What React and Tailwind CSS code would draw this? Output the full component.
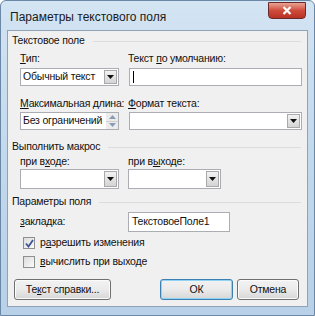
import React from "react";

const font = { fontFamily: '"Liberation Sans", Arial, sans-serif' };

function Arrow() {
  return (
    <svg width="7" height="4" viewBox="0 0 7 4">
      <path d="M0 0 H7 L3.5 4 Z" fill="#111" />
    </svg>
  );
}

function Combo({ w, value = "" }) {
  return (
    <div className={`flex h-full border border-[#abadb3] bg-white ${w}`}>
      <div className="flex-1 flex items-center pl-[2px] text-[10.5px] tracking-[-0.2px] text-[#111] whitespace-nowrap overflow-hidden">{value}</div>
      <div className="w-[13px] my-[1px] mr-[1px] flex items-center justify-center border border-[#a9a9a9] bg-gradient-to-b from-[#f2f2f2] to-[#d4d4d4]">
        <Arrow />
      </div>
    </div>
  );
}

function Header({ children }) {
  return (
    <div className="flex items-center h-[16px] pl-[4px] pr-[6px] text-[10.5px] tracking-[-0.2px] text-[#111]">
      <span className="whitespace-nowrap">{children}</span>
      <div className="flex-1 ml-[8px] h-px bg-[#dcdcdc]" />
    </div>
  );
}

function Check({ checked, children }) {
  return (
    <div className="flex items-center h-[16px] pl-[15px] text-[10.5px] tracking-[-0.2px] text-[#111]">
      <div className="w-[12px] h-[12px] border border-[#8e8f8f] bg-gradient-to-br from-[#dcdcdc] to-[#fafafa] flex items-center justify-center">
        {checked && (
          <svg width="9" height="9" viewBox="0 0 9 9">
            <path d="M1 4.5 L3.5 7.5 L8 1" stroke="#3d5596" strokeWidth="1.8" fill="none" />
          </svg>
        )}
      </div>
      <span className="ml-[5px]">{children}</span>
    </div>
  );
}

function Btn({ children, w, def }) {
  return (
    <div
      className={`h-[21px] ${w} rounded-[3px] border ${def ? "border-[#3c7fb1] shadow-[inset_0_0_0_1px_#8fd3f5]" : "border-[#707070] shadow-[inset_0_0_0_1px_#fbfbfb]"} bg-gradient-to-b from-[#f2f2f2] via-[#ebebeb] to-[#d6d6d6] flex items-center justify-center text-[10.5px] tracking-[-0.2px] text-[#111]`}
    >
      {children}
    </div>
  );
}

export default function App() {
  return (
    <div style={font} className="w-[315px] h-[316px] bg-gradient-to-b from-[#d3e4f3] via-[#c2d8ec] to-[#b8d1e8] border border-[#6a87a5] rounded-t-[6px] flex flex-col overflow-hidden">
      <div className="h-[29px] flex items-start relative">
        <div className="pl-[9px] pt-[7px] text-[12px] text-[#1a1a1a]">Параметры текстового поля</div>
        <div className="absolute right-[8px] top-[1px] w-[38px] h-[17px] rounded-b-[4px] border border-[#6b2a2a] bg-gradient-to-b from-[#e8a294] via-[#cf4b3c] to-[#b83223] flex items-center justify-center">
          <svg width="10" height="9" viewBox="0 0 10 9">
            <path d="M1.5 1 L8.5 8 M8.5 1 L1.5 8" stroke="#fff" strokeWidth="2.2" />
          </svg>
        </div>
      </div>
      <div className="mx-[6px] mb-[8px] flex-1 bg-[#f0f0f0] border border-[#8fa3b8] flex flex-col text-[10.5px] tracking-[-0.2px]">
        <div className="mt-[2px]">
          <Header>Текстовое поле</Header>
        </div>
        <div className="flex h-[16px] items-center text-[#111] mt-[2px]">
          <span className="ml-[12px] w-[108px]">
            <span className="underline">Т</span>ип:
          </span>
          <span>
            Текст <span className="underline">п</span>о умолчанию:
          </span>
        </div>
        <div className="flex h-[18px] mt-[1px]">
          <div className="ml-[12px] h-full">
            <Combo w="w-[99px]" value="Обычный текст" />
          </div>
          <div className="ml-[10px] w-[173px] h-full border border-[#abadb3] bg-white flex items-center pl-[3px]">
            <div className="w-px h-[12px] bg-black" />
          </div>
        </div>
        <div className="flex h-[16px] items-center text-[#111] mt-[10px]">
          <span className="ml-[12px] w-[108px] whitespace-nowrap">
            <span className="underline">М</span>аксимальная длина:
          </span>
          <span>
            <span className="underline">Ф</span>ормат текста:
          </span>
        </div>
        <div className="flex h-[18px]">
          <div className="ml-[12px] w-[99px] h-full border border-[#abadb3] bg-white flex">
            <div className="flex-1 flex items-center pl-[2px] text-[#111] whitespace-nowrap overflow-hidden">Без ограничений</div>
            <div className="w-[12px] flex flex-col">
              <div className="flex-1 flex items-center justify-center bg-[#ececec] border-b border-[#d0d0d0]">
                <svg width="7" height="4" viewBox="0 0 7 4"><path d="M0 4 H7 L3.5 0 Z" fill="#8a9bb5" /></svg>
              </div>
              <div className="flex-1 flex items-center justify-center bg-[#ececec]">
                <svg width="7" height="4" viewBox="0 0 7 4"><path d="M0 0 H7 L3.5 4 Z" fill="#8a9bb5" /></svg>
              </div>
            </div>
          </div>
          <div className="ml-[10px] h-full">
            <Combo w="w-[173px]" />
          </div>
        </div>
        <div className="mt-[9px]">
          <Header>Выполнить макрос</Header>
        </div>
        <div className="flex h-[14px] items-center text-[#111]">
          <span className="ml-[12px] w-[108px]">
            при в<span className="underline">х</span>оде:
          </span>
          <span>
            при в<span className="underline">ы</span>ходе:
          </span>
        </div>
        <div className="flex h-[20px]">
          <div className="ml-[12px] h-full">
            <Combo w="w-[99px]" />
          </div>
          <div className="ml-[9px] h-full">
            <Combo w="w-[93px]" />
          </div>
        </div>
        <div className="mt-[5px]">
          <Header>Параметры поля</Header>
        </div>
        <div className="flex h-[20px] items-center text-[#111] mt-[2px]">
          <span className="ml-[12px] w-[108px]">
            <span className="underline">з</span>акладка:
          </span>
          <div className="w-[102px] h-full border border-[#abadb3] bg-white flex items-center pl-[3px]">ТекстовоеПоле1</div>
        </div>
        <div className="mt-[3px]">
          <Check checked>
            р<span className="underline">а</span>зрешить изменения
          </Check>
        </div>
        <div className="mt-[3px]">
          <Check>
            <span className="underline">в</span>ычислить при выходе
          </Check>
        </div>
        <div className="flex mt-[9px] pl-[6px]">
          <Btn w="w-[97px]">
            Те<span className="underline">к</span>ст справки...
          </Btn>
          <div className="ml-[49px]">
            <Btn w="w-[73px]" def>
              ОК
            </Btn>
          </div>
          <div className="ml-[4px]">
            <Btn w="w-[62px]">Отмена</Btn>
          </div>
        </div>
      </div>
    </div>
  );
}
